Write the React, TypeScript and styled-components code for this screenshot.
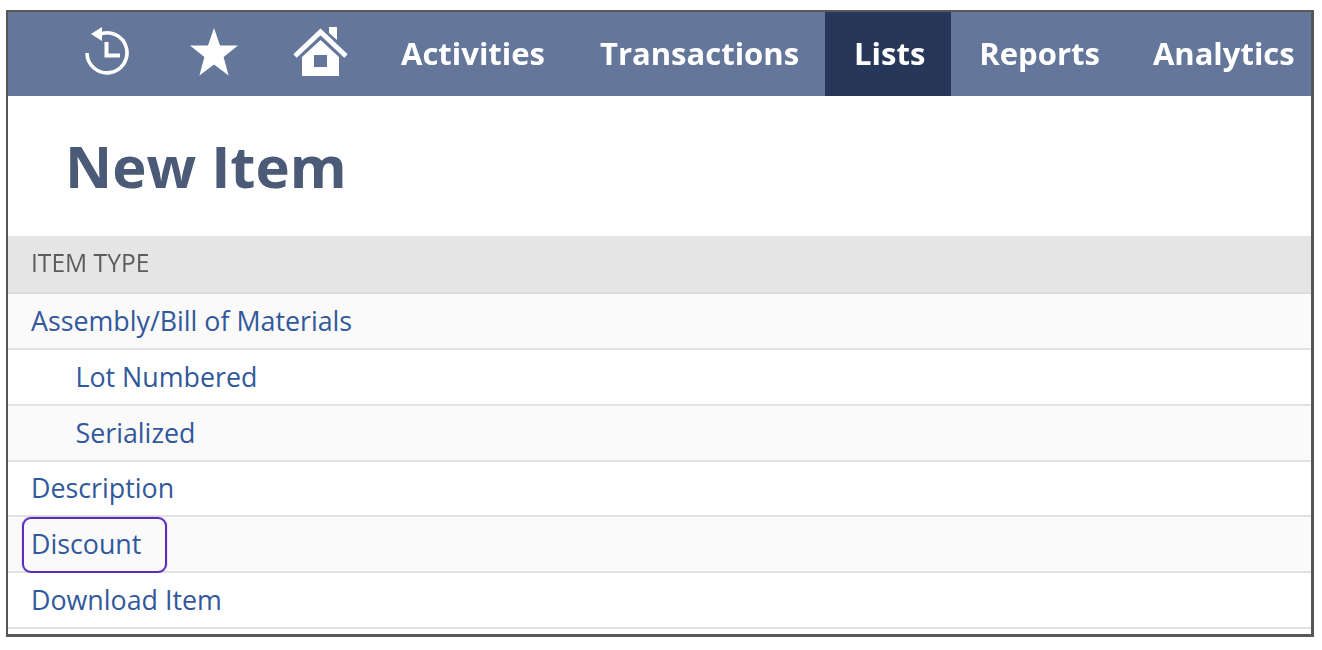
import React from "react";
import styled, { createGlobalStyle } from "styled-components";

const GlobalStyle = createGlobalStyle`
  html, body {
    margin: 0;
    padding: 0;
    background: #fff;
    font-family: "Open Sans", "Liberation Sans", sans-serif;
  }
`;

const Page = styled.div`
  width: 1322px;
  height: 650px;
  padding: 10px 8px 13px 6px;
  box-sizing: border-box;
  overflow: hidden;
`;

const Frame = styled.div`
  height: 100%;
  border-style: solid;
  border-color: #585858;
  border-width: 2px 3px 3px 2px;
  box-sizing: border-box;
  overflow: hidden;
  filter: blur(0.4px);
`;

const NavBar = styled.nav`
  display: flex;
  align-items: stretch;
  height: 84px;
  background: #64779a;
  padding-left: 45px;
`;

const IconSlot = styled.div`
  display: flex;
  flex: none;
  align-items: center;
  justify-content: center;
  width: 107px;
  padding-bottom: 4px;
`;

const NavItems = styled.div`
  display: flex;
  flex: none;
  align-items: stretch;
  margin-left: -2px;
`;

const NavItem = styled.a<{ $active?: boolean }>`
  display: flex;
  align-items: center;
  padding: 0 26px 3px 29px;
  box-sizing: border-box;
  font-size: 31px;
  font-weight: 700;
  color: #fff;
  background: ${(p) => (p.$active ? "#27375a" : "transparent")};

  &:nth-child(n + 4) {
    padding: 0 25px 3px 28px;
  }
`;

const Title = styled.h1`
  margin: 0;
  height: 140px;
  padding: 30px 0 0 57px;
  box-sizing: border-box;
  font-size: 58px;
  line-height: 80px;
  font-weight: 700;
  color: #4a5a77;
`;

const TableHead = styled.div`
  display: flex;
  align-items: center;
  height: 58px;
  padding: 0 0 3px 23px;
  box-sizing: border-box;
  background: #e5e5e5;
  border-bottom: 2px solid #dcdcdc;
  font-size: 24.6px;
  color: #5c5c5c;
`;

const Row = styled.div<{ $shaded: boolean; $indent?: boolean }>`
  position: relative;
  display: flex;
  align-items: center;
  height: 55.85px;
  padding: 0 0 1px ${(p) => (p.$indent ? 67.5 : 23)}px;
  box-sizing: border-box;
  background: ${(p) => (p.$shaded ? "#fafafa" : "#fff")};
  border-bottom: 2px solid #e2e2e2;
  font-size: 26.8px;
  color: #31589a;
`;

const Highlight = styled.span`
  position: absolute;
  left: 14px;
  top: 0;
  width: 145px;
  height: 56px;
  box-sizing: border-box;
  border: 2px solid #5b2dbb;
  border-radius: 9px;
  box-shadow: 0 0 1px #5b2dbb;
`;

const HistoryIcon = () => (
  <svg width="46" height="52" viewBox="0 0 46 52" fill="none">
    <path d="M15 8.5 A20 20 0 1 1 3 27" stroke="#fff" strokeWidth="3.6" />
    <path d="M18 1 L18 15 L7 8 Z" fill="#fff" />
    <path d="M22.5 16 V29.5 H36" stroke="#fff" strokeWidth="4" />
  </svg>
);

const StarIcon = () => (
  <svg width="48" height="48" viewBox="0 0 48 48">
    <path
      d="M24 0 L30 17.6 L48 17.6 L33.6 29 L38.6 47.5 L24 36.6 L9.4 47.5 L14.4 29 L0 17.6 L18 17.6 Z"
      fill="#fff"
    />
  </svg>
);

const HomeIcon = () => (
  <svg width="56" height="52" viewBox="0 0 56 52">
    <path d="M36 1 H44 V14 L36 7 Z" fill="#fff" />
    <path d="M2 30 L27.5 6 L53 30" fill="none" stroke="#fff" strokeWidth="5" />
    <path
      fillRule="evenodd"
      d="M9 31 L27.5 14 L46 31 V50 H9 Z M21 29 V41 H34 V29 Z"
      fill="#fff"
    />
  </svg>
);

const rows = [
  { label: "Assembly/Bill of Materials" },
  { label: "Lot Numbered", indent: true },
  { label: "Serialized", indent: true },
  { label: "Description" },
  { label: "Discount", marked: true },
  { label: "Download Item" },
];

export default function App() {
  return (
    <Page>
      <GlobalStyle />
      <Frame>
        <NavBar>
          <IconSlot>
            <HistoryIcon />
          </IconSlot>
          <IconSlot>
            <StarIcon />
          </IconSlot>
          <IconSlot>
            <HomeIcon />
          </IconSlot>
          <NavItems>
            <NavItem>Activities</NavItem>
            <NavItem>Transactions</NavItem>
            <NavItem $active>Lists</NavItem>
            <NavItem>Reports</NavItem>
            <NavItem>Analytics</NavItem>
          </NavItems>
        </NavBar>
        <Title>New Item</Title>
        <TableHead>ITEM TYPE</TableHead>
        {rows.map((row, i) => (
          <Row key={row.label} $shaded={i % 2 === 0} $indent={row.indent}>
            {row.label}
            {row.marked && <Highlight />}
          </Row>
        ))}
      </Frame>
    </Page>
  );
}
